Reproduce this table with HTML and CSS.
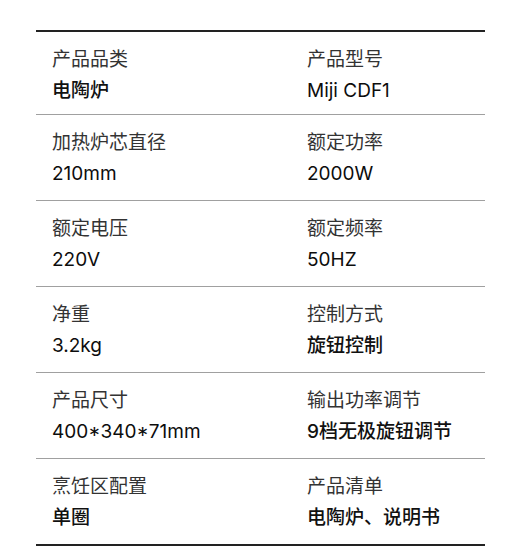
FILE: index.html
```html
<!DOCTYPE html>
<html lang="zh-CN">
<head>
<meta charset="utf-8">
<link rel="stylesheet" href="styles.css">
</head>
<body>
<div class="spec">
  <div class="row">
    <div class="cell"><div class="label">产品品类</div><div class="value">电陶炉</div></div>
    <div class="cell"><div class="label">产品型号</div><div class="value latin">Miji CDF1</div></div>
  </div>
  <div class="row">
    <div class="cell"><div class="label">加热炉芯直径</div><div class="value latin">210mm</div></div>
    <div class="cell"><div class="label">额定功率</div><div class="value latin">2000W</div></div>
  </div>
  <div class="row">
    <div class="cell"><div class="label">额定电压</div><div class="value latin">220V</div></div>
    <div class="cell"><div class="label">额定频率</div><div class="value latin">50HZ</div></div>
  </div>
  <div class="row">
    <div class="cell"><div class="label">净重</div><div class="value latin">3.2kg</div></div>
    <div class="cell"><div class="label">控制方式</div><div class="value">旋钮控制</div></div>
  </div>
  <div class="row">
    <div class="cell"><div class="label">产品尺寸</div><div class="value latin">400*340*71mm</div></div>
    <div class="cell"><div class="label">输出功率调节</div><div class="value">9档无极旋钮调节</div></div>
  </div>
  <div class="row">
    <div class="cell"><div class="label">烹饪区配置</div><div class="value">单圈</div></div>
    <div class="cell"><div class="label">产品清单</div><div class="value">电陶炉、说明书</div></div>
  </div>
</div>
</body>
</html>
```
FILE: styles.css
```css
html, body {
  margin: 0;
  padding: 0;
  background: #ffffff;
}
body {
  font-family: "Inter", "Noto Sans CJK SC", sans-serif;
  color: #1a1a1a;
}
.spec {
  margin: 30px 0 0 36px;
  width: 449px;
  border-top: 2px solid #222222;
  border-bottom: 2px solid #222222;
}
.row {
  display: grid;
  grid-template-columns: 255px 194px;
  height: 86px;
  box-sizing: border-box;
  border-bottom: 1px solid #a0a0a0;
}
.row:first-child {
  height: 83px;
}
.row:last-child {
  height: 85px;
  border-bottom: none;
}
.cell {
  padding: 13px 0 0 16px;
}
.label {
  font-size: 19px;
  line-height: 30px;
  color: #333333;
  font-weight: 400;
}
.value {
  font-size: 19px;
  line-height: 31px;
  color: #111111;
  font-weight: 500;
}
.value.latin {
  font-weight: 400;
  color: #0d0d0d;
}
```
